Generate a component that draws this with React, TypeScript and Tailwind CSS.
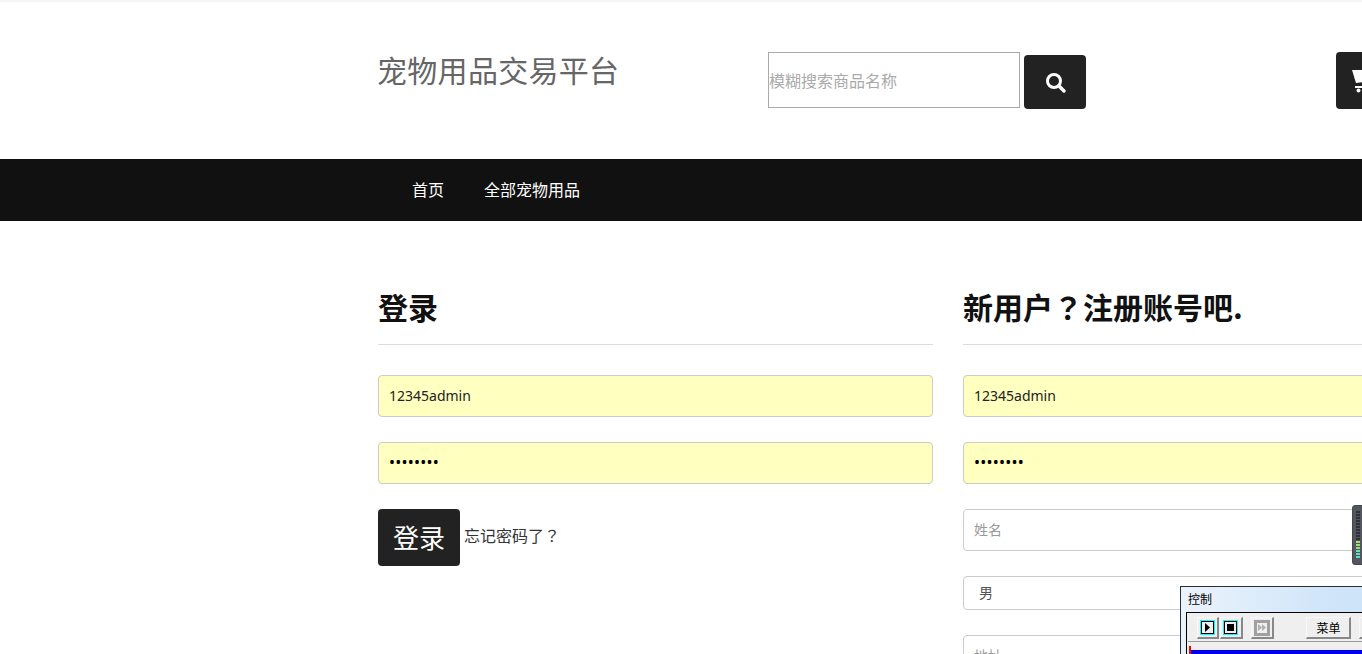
import React from "react";

const inputCls =
  "block w-full h-[42px] rounded-[4px] border border-[#cccccc] pl-[10px] pr-[10px] pb-[2px] text-[14px] text-[#222222] outline-none placeholder:text-[#999999]";
const btnCls =
  "h-[22px] bg-[#efefef] border border-[#f8f8f8] border-r-2 border-b-2 border-r-[#888888] border-b-[#888888] flex items-center";

function CyanBox({ children }: { children: React.ReactNode }) {
  return (
    <div className="w-[15px] h-[15px] border border-[#00ffff] flex">
      <div className="flex-1 border border-black flex items-center justify-center">{children}</div>
    </div>
  );
}

const bars = [
  "#2f3138", "#2f3138", "#2f3138", "#2f3138", "#2f3138", "#2f3138", "#2f3138",
  "#2f3138", "#2f3138", "#2f3138", "#a6dc6e", "#a6dc6e", "#8fdc84", "#6ce0a8",
  "#55e0bc", "#4fe0c4",
];

export default function App() {
  return (
    <div className="relative w-[1362px] h-[654px] overflow-hidden bg-white font-['Noto_Sans','Noto_Sans_CJK_SC',sans-serif] text-[14px] text-[#333333]">
      <div className="w-[1896px]">
        <div className="h-[2px] bg-[#f5f5f5]" />
        {/* header */}
        <div className="h-[157px] pl-[377px] flex items-start">
          <div className="w-[391px] pt-[45px] text-[30px] leading-[44px] text-[#666666] font-['Noto_Sans_CJK_SC',sans-serif] tracking-[0.3px]">
            宠物用品交易平台
          </div>
          <div className="pt-[50px] flex items-start">
            <input
              readOnly
              placeholder="模糊搜索商品名称"
              className="w-[252px] h-[56px] border border-[#aaaaaa] px-0 text-[16px] outline-none placeholder:text-[#aaaaaa] font-['Noto_Sans_CJK_SC',sans-serif]"
            />
            <div className="ml-[4px] mt-[3px] w-[62px] h-[54px] bg-[#222222] rounded-[4px] flex items-center justify-center">
              <svg width="21" height="21" viewBox="0 0 21 21" fill="none" stroke="#ffffff">
                <circle cx="9" cy="9" r="6.5" strokeWidth="3" />
                <path d="M13.8 13.8L19 19" strokeWidth="3.4" strokeLinecap="round" />
              </svg>
            </div>
            <div className="ml-[250px] w-[120px] h-[57px] bg-[#222222] rounded-[4px] flex items-start pl-[16px] pt-[18px]">
              <svg width="30" height="23" viewBox="0 0 30 23" fill="#ffffff">
                <path d="M0 0h30v10l-26 3z" />
                <path d="M3 16h27v2H3z" />
                <circle cx="6.5" cy="20.5" r="2" />
                <circle cx="25" cy="20.5" r="2" />
              </svg>
            </div>
          </div>
        </div>
        {/* nav */}
        <nav className="h-[62px] bg-[#111111] pl-[412px] pb-[2px] flex items-center gap-[40px] text-[16px] text-white font-['Noto_Sans_CJK_SC',sans-serif]">
          <span>首页</span>
          <span>全部宠物用品</span>
        </nav>
        {/* main */}
        <main className="pl-[378px] flex gap-[30px] pt-[65px]">
          <section className="w-[555px]">
            <h2 className="h-[59px] border-b border-[#dddddd] text-[30px] leading-[41px] font-bold text-[#111111] font-['Noto_Sans_CJK_SC',sans-serif]">
              登录
            </h2>
            <div className="mt-[30px] flex flex-col gap-[25px]">
              <input readOnly value="12345admin" className={inputCls + " bg-[#ffffc0]"} />
              <input readOnly type="password" value="12345adm" className={inputCls + " bg-[#ffffc0] !text-black !text-[16px] tracking-[0.25px]"} />
            </div>
            <div className="mt-[25px] flex items-center">
              <div className="w-[82px] h-[57px] pb-[2px] bg-[#222222] rounded-[4px] flex items-center justify-center text-[26px] text-white font-['Noto_Sans_CJK_SC',sans-serif]">
                登录
              </div>
              <span className="ml-[4px] mb-[5px] text-[16px] text-[#333333] font-['Noto_Sans_CJK_SC',sans-serif]">
                忘记密码了<span className="font-['Noto_Sans_CJK_TC',sans-serif]">？</span>
              </span>
            </div>
          </section>
          <section className="w-[555px]">
            <h2 className="h-[59px] border-b border-[#dddddd] text-[30px] leading-[41px] font-bold text-[#111111] font-['Noto_Sans_CJK_SC',sans-serif]">
              新用户<span className="font-['Noto_Sans_CJK_TC',sans-serif]">？</span>注册账号吧.
            </h2>
            <div className="mt-[30px] flex flex-col gap-[25px]">
              <input readOnly value="12345admin" className={inputCls + " bg-[#ffffc0]"} />
              <input readOnly type="password" value="12345adm" className={inputCls + " bg-[#ffffc0] !text-black !text-[16px] tracking-[0.25px]"} />
              <input readOnly placeholder="姓名" className={inputCls} />
              <div className="h-[34px] rounded-[4px] border border-[#cccccc] pl-[15px] pb-[2px] flex items-center text-[14px] text-[#555555] font-['Noto_Sans_CJK_SC',sans-serif]">
                男
              </div>
              <input readOnly placeholder="地址" className={inputCls} />
            </div>
          </section>
        </main>
      </div>

      {/* meter widget */}
      <div className="absolute left-[1352px] top-[505px] w-[14px] h-[60px] rounded-[3px] bg-[#54565f] border border-[#45474f] flex flex-col justify-start pt-[5px] pl-[3px]">
        {bars.map((c, i) => (
          <div key={i} className="w-[4px] h-[2px] mb-[1px]" style={{ backgroundColor: c }} />
        ))}
      </div>

      {/* control window */}
      <div className="absolute left-[1180px] top-[586px] w-[300px] h-[100px] border border-[#2b2f33] bg-gradient-to-r from-[#eaf3fc] via-[#d0e5f9] to-[#c4def8]">
        <div className="h-[25px] pl-[7px] pb-[2px] flex items-center text-[12px] text-black font-['Noto_Sans_CJK_SC',sans-serif]">控制</div>
        <div className="ml-[5px] border border-black bg-[#efefef] h-[80px]">
          <div className="h-[29px] ml-[1px] border-b border-[#9a9a9a] flex items-start pl-[9px] pt-[4px]">
            <div className={btnCls + " w-[22px] pl-[2px]"}>
              <CyanBox>
                <svg width="7" height="9" viewBox="0 0 7 9"><path d="M1 0v9l5-4.5z" fill="#000" /></svg>
              </CyanBox>
            </div>
            <div className={btnCls + " ml-[1px] w-[23px] pl-[2px]"}>
              <CyanBox>
                <div className="w-[7px] h-[7px] bg-black" />
              </CyanBox>
            </div>
            <div className={btnCls + " ml-[8px] w-[23px] pl-[2px]"}>
              <div className="w-[16px] h-[16px] border-[3px] border-[#a0a0a0] flex items-center justify-center">
                <svg width="8" height="7" viewBox="0 0 8 7" fill="#b0b0b0"><path d="M0 0l4 3.5L0 7zM4 0l4 3.5L4 7z" /></svg>
              </div>
            </div>
            <div className={btnCls + " ml-[32px] w-[45px] pl-[1px] justify-center text-[12px] text-black font-['Noto_Sans_CJK_SC',sans-serif]"}>菜单</div>
            <div className={btnCls + " ml-[8px] w-[46px]"} />
          </div>
          <div className="pl-[2px] pt-[4px] flex items-start">
            <div className="w-[2px] h-[30px] bg-[#ff0000]" />
            <div className="flex-1 h-[30px] mt-[4px] bg-[#0000ee]" />
          </div>
        </div>
      </div>
    </div>
  );
}
